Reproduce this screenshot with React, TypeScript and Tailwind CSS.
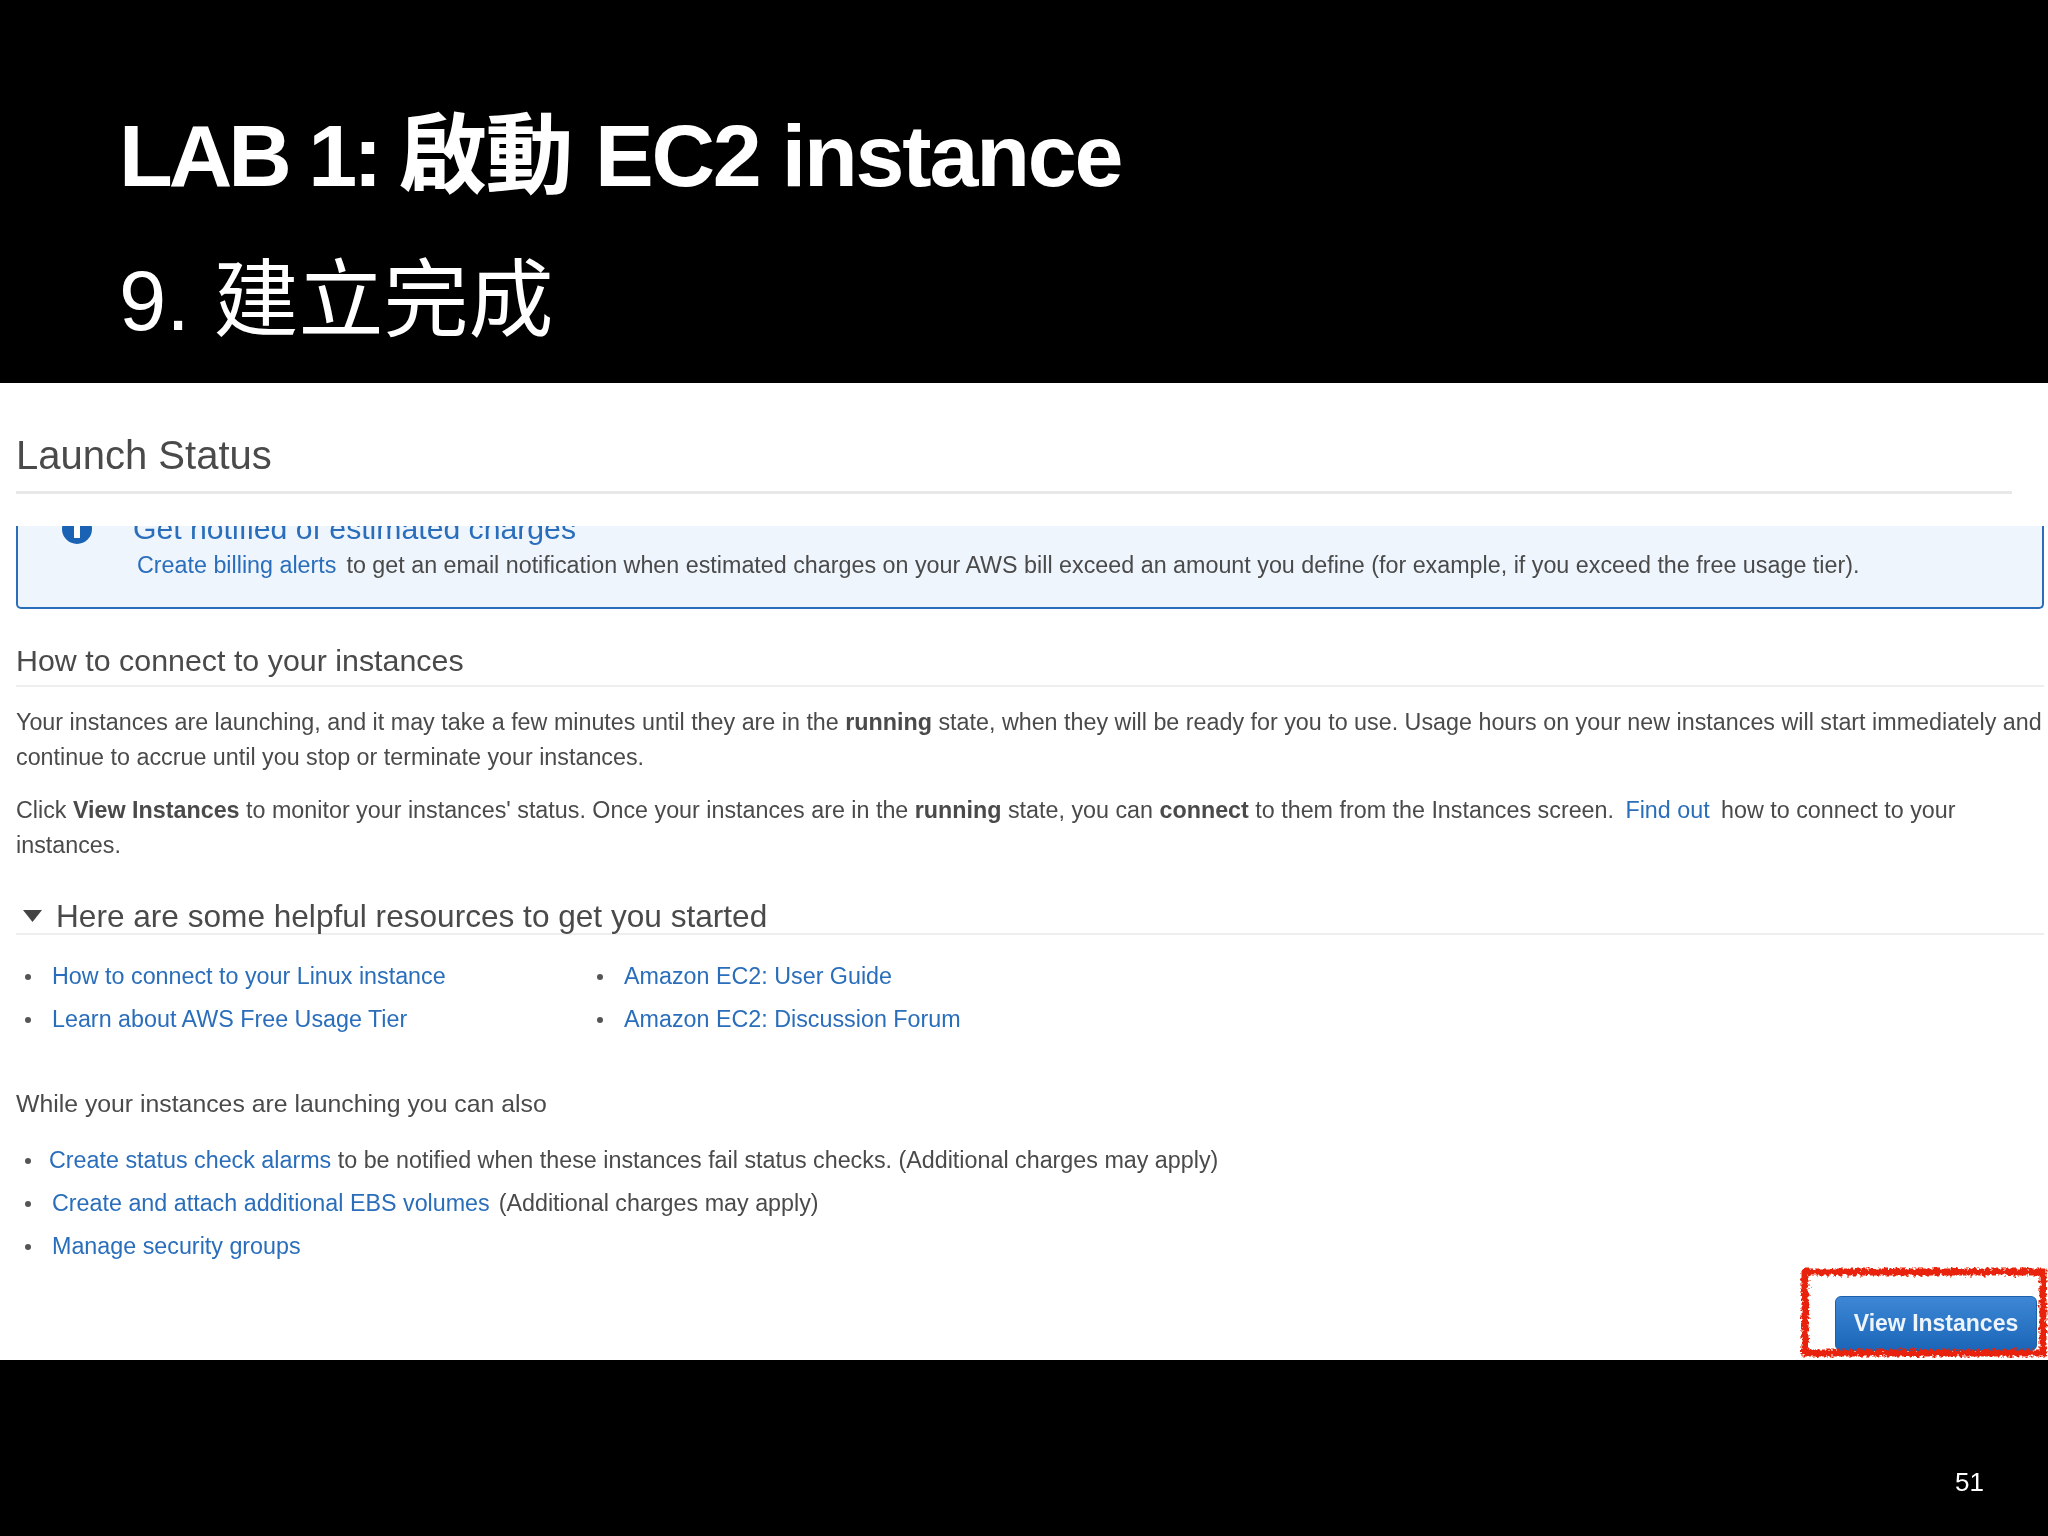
const sans = "font-['Liberation_Sans','Noto_Sans_CJK_TC',sans-serif]"

function Bullet() {
  return <span className="mr-[21px] ml-[9px] h-[6px] w-[6px] shrink-0 rounded-full bg-[#555]" />
}

function ListRow({ children }: { children: React.ReactNode }) {
  return <li className="flex h-[43px] items-center whitespace-pre">{children}</li>
}

function Link({ children, spaced }: { children: React.ReactNode; spaced?: boolean }) {
  return <span className={spaced ? "mx-[5px] text-[#2a6ebb]" : "text-[#2a6ebb]"}>{children}</span>
}

function ScribbleBox() {
  return (
    <svg className="absolute top-[-29px] right-0 h-[91px] w-[248px]" viewBox="0 0 248 91">
      <filter id="rough" x="-5%" y="-5%" width="110%" height="110%">
        <feTurbulence type="fractalNoise" baseFrequency="0.3" numOctaves="3" seed="4" />
        <feDisplacementMap in="SourceGraphic" scale="7" />
      </filter>
      <rect x="5" y="5" width="238" height="81" fill="none" stroke="#e8200c" strokeWidth="7" filter="url(#rough)" />
    </svg>
  )
}

export default function App() {
  return (
    <div className={`flex h-[1536px] w-[2048px] flex-col overflow-hidden bg-black blur-[0.4px] ${sans}`}>
      {/* Slide title */}
      <header className="h-[383px] pt-[83px] pl-[119px] leading-[145px] text-white">
        <h1 className="text-[88px] font-bold tracking-[-2.2px]">
          <span className="tracking-[-4px]">LAB 1: </span>
          <span className="tracking-[-1.5px]">啟動 </span>
          EC2 instance
        </h1>
        <h2 className="text-[85px] font-normal">9. 建立完成</h2>
      </header>

      {/* Screenshot of the console */}
      <main className="relative h-[977px] bg-white pt-[50px] text-[23.3px] leading-[35px] text-[#4a4a4a]">
        <div className="pr-[36px] pl-[16px]">
          <h3 className="border-b-[3px] border-[#e8e8e8] pb-[14px] text-[40px] leading-[44px]">Launch Status</h3>
        </div>

        <div className="mt-[32px] mr-[4px] ml-[16px] h-[83px] overflow-hidden rounded-b-[5px] border-x-2 border-b-2 border-[#2a6ebb] bg-[#eef5fd]">
          <div className="-mt-[15px] flex items-center pl-[44px] text-[30.2px] leading-[36px] text-[#2a6ebb]">
            <span className="mr-[41px] flex h-[30px] w-[30px] items-center justify-center rounded-full bg-[#1a62b4]">
              <span className="mt-[4px] h-[13px] w-[6px] bg-white" />
            </span>
            Get notified of estimated charges
          </div>
          <p className="mt-[1px] pl-[119px] whitespace-nowrap">
            <Link>Create billing alerts</Link>
            <span className="ml-[10px]">to get an email notification when estimated charges on your AWS bill exceed an amount you define (for example, if you exceed the free usage tier).</span>
          </p>
        </div>

        <div className="mt-[31px] pr-[4px] pl-[16px]">
          <h3 className="border-b-2 border-[#eee] pb-[5px] text-[30.4px] leading-[40px]">How to connect to your instances</h3>
          <p className="mt-[18px]">
            Your instances are launching, and it may take a few minutes until they are in the <b>running</b> state, when they will be ready for you to use. Usage hours on your new instances will start immediately and continue to accrue until you stop or terminate your instances.
          </p>
          <p className="mt-[18px] pr-[60px]">
            Click <b>View Instances</b> to monitor your instances' status. Once your instances are in the <b>running</b> state, you can <b>connect</b> to them from the Instances screen. <Link spaced>Find out</Link> how to connect to your instances.
          </p>

          <div className="mt-[36px] flex items-center border-b-2 border-[#eee] text-[31.6px] leading-[34px]">
            <svg className="mr-[14px] ml-[7px] h-[12px] w-[19px]" viewBox="0 0 19 12">
              <path d="M0 0h19L9.5 12z" fill="#444" />
            </svg>
            Here are some helpful resources to get you started
          </div>

          <div className="mt-[20px] flex">
            <ul className="w-[572px]">
              <ListRow><Bullet /><Link>How to connect to your Linux instance</Link></ListRow>
              <ListRow><Bullet /><Link>Learn about AWS Free Usage Tier</Link></ListRow>
            </ul>
            <ul>
              <ListRow><Bullet /><Link>Amazon EC2: User Guide</Link></ListRow>
              <ListRow><Bullet /><Link>Amazon EC2: Discussion Forum</Link></ListRow>
            </ul>
          </div>

          <p className="mt-[45px] text-[24.8px]">While your instances are launching you can also</p>

          <ul className="mt-[18px]">
            <ListRow><Bullet /><span className="-ml-[3px]"><Link>Create status check alarms</Link> to be notified when these instances fail status checks. (Additional charges may apply)</span></ListRow>
            <ListRow><Bullet /><Link>Create and attach additional EBS volumes</Link><span className="ml-[9px]">(Additional charges may apply)</span></ListRow>
            <ListRow><Bullet /><Link>Manage security groups</Link></ListRow>
          </ul>

          <div className="relative mt-[28px] -mr-[4px] flex justify-end pr-[11px]">
            <ScribbleBox />
            <button className="h-[55px] w-[202px] rounded-[6px] border border-[#1d5fa8] bg-gradient-to-b from-[#3d87d6] to-[#1b66b8] text-[23px] font-bold text-[#eef4fb]">
              View Instances
            </button>
          </div>
        </div>
      </main>

      {/* Slide number */}
      <footer className="flex flex-1 justify-end pt-[105px] pr-[64px] text-[26px] leading-[34px] text-white">51</footer>
    </div>
  )
}
